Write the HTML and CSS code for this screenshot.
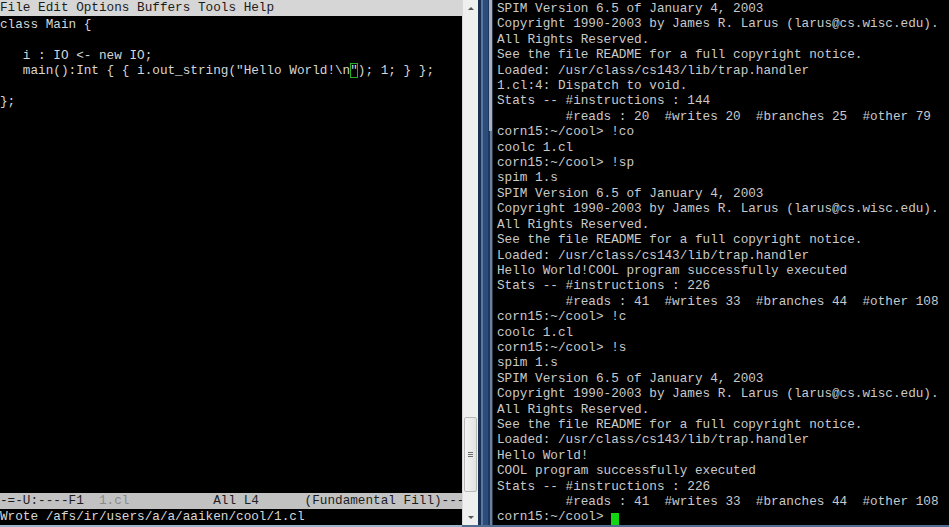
FILE: index.html
```html
<!DOCTYPE html>
<html lang="en">
<head>
  <meta charset="UTF-8">
  <title>emacs + spim</title>
  <link rel="stylesheet" href="styles.css">
</head>
<body>
  <div class="screen">
    <!-- emacs window -->
    <div class="emacs">
      <div class="menubar">File Edit Options Buffers Tools Help</div>
      <pre class="buffer">class Main {

   i : IO &lt;- new IO;
   main():Int { { i.out_string("Hello World!\n<span class="point">"</span>); 1; } };

};</pre>
      <div class="modeline">-=-U:----F1  <span class="bufname">1.cl</span>           All L4      (Fundamental Fill)---</div>
      <div class="minibuf">Wrote /afs/ir/users/a/a/aaiken/cool/1.cl</div>
    </div>

    <div class="scrollbar">
      <div class="arrow up"></div>
      <div class="track"></div>
      <div class="thumb"><span></span><span></span><span></span></div>
      <div class="gap"></div>
      <div class="arrow down"></div>
    </div>

    <div class="divider"><div class="divider-thumb"></div></div>

    <!-- terminal -->
    <pre class="term">SPIM Version 6.5 of January 4, 2003
Copyright 1990-2003 by James R. Larus (larus@cs.wisc.edu).
All Rights Reserved.
See the file README for a full copyright notice.
Loaded: /usr/class/cs143/lib/trap.handler
1.cl:4: Dispatch to void.
Stats -- #instructions : 144
         #reads : 20  #writes 20  #branches 25  #other 79
corn15:~/cool> !co
coolc 1.cl
corn15:~/cool> !sp
spim 1.s
SPIM Version 6.5 of January 4, 2003
Copyright 1990-2003 by James R. Larus (larus@cs.wisc.edu).
All Rights Reserved.
See the file README for a full copyright notice.
Loaded: /usr/class/cs143/lib/trap.handler
Hello World!COOL program successfully executed
Stats -- #instructions : 226
         #reads : 41  #writes 33  #branches 44  #other 108
corn15:~/cool> !c
coolc 1.cl
corn15:~/cool> !s
spim 1.s
SPIM Version 6.5 of January 4, 2003
Copyright 1990-2003 by James R. Larus (larus@cs.wisc.edu).
All Rights Reserved.
See the file README for a full copyright notice.
Loaded: /usr/class/cs143/lib/trap.handler
Hello World!
COOL program successfully executed
Stats -- #instructions : 226
         #reads : 41  #writes 33  #branches 44  #other 108
corn15:~/cool&gt; <span class="cursor"> </span></pre>
  </div>
  <div class="bottom-edge"></div>
</body>
</html>
```

FILE: styles.css
```css
html, body {
  margin: 0;
  padding: 0;
  background: #000;
  overflow: hidden;
}
body {
  width: 949px;
  height: 527px;
  font-family: "Liberation Mono", "Courier New", monospace;
  font-size: 12.7px;
  line-height: 15.4px;
}
pre {
  margin: 0;
  font: inherit;
}
.screen {
  display: flex;
  height: 525px;
}

/* emacs */
.emacs {
  width: 462px;
  display: flex;
  flex-direction: column;
  background: #000;
  color: #d6d6d6;
}
.menubar {
  height: 16px;
  line-height: 16px;
  background: #d6d6d6;
  color: #1c1c1c;
  white-space: pre;
}
.buffer {
  flex: 1;
  white-space: pre;
  overflow: hidden;
  padding-top: 1px;
}
.point {
  box-shadow: inset 0 0 0 1px #1fb31f;
}
.modeline {
  height: 16px;
  line-height: 16px;
  background: #c2c2c2;
  color: #1e1e1e;
  white-space: pre;
}
.bufname {
  color: #8a8a8a;
}
.minibuf {
  height: 16px;
  line-height: 16px;
  white-space: pre;
  color: #d8d8d8;
}

/* vertical scrollbar of emacs */
.scrollbar {
  width: 15px;
  border-left: 1px solid #d9d9d9;
  background: #efefef;
  display: flex;
  flex-direction: column;
  align-items: center;
}
.arrow {
  width: 0;
  height: 0;
  border-left: 3px solid transparent;
  border-right: 3px solid transparent;
}
.arrow.up {
  margin-top: 7px;
  border-bottom: 3px solid #555;
}
.arrow.down {
  margin-bottom: 6px;
  border-top: 3px solid #555;
}
.track {
  flex: 1;
}
.thumb {
  width: 13px;
  height: 75px;
  box-sizing: border-box;
  border: 1px solid #b9b9b9;
  border-radius: 2px;
  background: linear-gradient(to right, #f4f4f4, #e2e2e2);
  display: flex;
  flex-direction: column;
  align-items: center;
  justify-content: center;
  gap: 1px;
}
.thumb span {
  width: 5px;
  height: 1px;
  background: #6e6e6e;
}
.gap {
  height: 24px;
}

/* window frame between the two windows */
.divider {
  width: 15px;
  background: linear-gradient(to right,
    #1a2f52 0, #1a2f52 3px,
    #5578a4 3px, #5578a4 5px,
    #2c4c7b 5px, #2c4c7b 10px,
    #1d3760 10px, #1d3760 12px,
    #6f819a 12px, #6f819a 14px,
    #2a3a4c 14px);
}
.divider-thumb {
  margin-left: 11px;
  width: 3px;
  height: 131px;
  background: #a8b2be;
}

/* terminal */
.term {
  flex: 1;
  padding: 1px 0 0 4px;
  color: #cacaca;
  white-space: pre;
  overflow: hidden;
}
.cursor {
  display: inline-block;
  width: 8px;
  height: 16px;
  vertical-align: -4px;
  background: #13d613;
}

.bottom-edge {
  height: 2px;
  background: linear-gradient(to right, #9cb4cc 0, #9cb4cc 462px, #4f6e90 462px);
}
```
